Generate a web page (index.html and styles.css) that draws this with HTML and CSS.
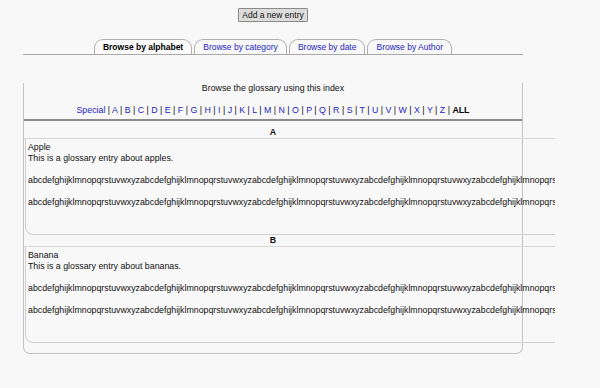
FILE: index.html
```html
<!DOCTYPE html>
<html lang="en">
<head>
    <meta charset="UTF-8">
    <title>Glossary</title>
    <link rel="stylesheet" href="styles.css">
</head>
<body>

    <div class="page">
        <div class="main">
            <div class="actions">
                <button class="btn">Add a new entry</button>
            </div>

            <ul class="tabs">
                <li class="tab active">Browse by alphabet</li>
                <li class="tab"><a href="#">Browse by category</a></li>
                <li class="tab"><a href="#">Browse by date</a></li>
                <li class="tab"><a href="#">Browse by Author</a></li>
            </ul>

            <div class="glossary-box">
                <div class="index">
                    <div class="index-title">Browse the glossary using this index</div>
                    <div class="alphabet">
                        <a href="#">Special</a> | <a href="#">A</a> | <a href="#">B</a> | <a href="#">C</a> | <a href="#">D</a> | <a href="#">E</a> | <a href="#">F</a> | <a href="#">G</a> | <a href="#">H</a> | <a href="#">I</a> | <a href="#">J</a> | <a href="#">K</a> | <a href="#">L</a> | <a href="#">M</a> | <a href="#">N</a> | <a href="#">O</a> | <a href="#">P</a> | <a href="#">Q</a> | <a href="#">R</a> | <a href="#">S</a> | <a href="#">T</a> | <a href="#">U</a> | <a href="#">V</a> | <a href="#">W</a> | <a href="#">X</a> | <a href="#">Y</a> | <a href="#">Z</a> | <b>ALL</b>
                    </div>
                </div>

                <div class="entries">
                    <div class="letter"><span>A</span></div>
                    <div class="entry">
                        <div class="concept">Apple</div>
                        <p>This is a glossary entry about apples.</p>
                        <p>abcdefghijklmnopqrstuvwxyzabcdefghijklmnopqrstuvwxyzabcdefghijklmnopqrstuvwxyzabcdefghijklmnopqrstuvwxyzabcdefghijklmnopqrstuvwxyzabcdefghijklmnopqrstuvwxyz</p>
                        <p>abcdefghijklmnopqrstuvwxyzabcdefghijklmnopqrstuvwxyzabcdefghijklmnopqrstuvwxyzabcdefghijklmnopqrstuvwxyzabcdefghijklmnopqrstuvwxyzabcdefghijklmnopqrstuvwxyz</p>
                    </div>

                    <div class="letter"><span>B</span></div>
                    <div class="entry">
                        <div class="concept">Banana</div>
                        <p>This is a glossary entry about bananas.</p>
                        <p>abcdefghijklmnopqrstuvwxyzabcdefghijklmnopqrstuvwxyzabcdefghijklmnopqrstuvwxyzabcdefghijklmnopqrstuvwxyzabcdefghijklmnopqrstuvwxyzabcdefghijklmnopqrstuvwxyz</p>
                        <p>abcdefghijklmnopqrstuvwxyzabcdefghijklmnopqrstuvwxyzabcdefghijklmnopqrstuvwxyzabcdefghijklmnopqrstuvwxyzabcdefghijklmnopqrstuvwxyzabcdefghijklmnopqrstuvwxyz</p>
                    </div>
                </div>
            </div>
        </div>
    </div>

</body>
</html>
```

FILE: styles.css
```css
body {
    margin: 0;
    background: #f8f8f8;
    font-family: 'Liberation Sans', Arial, sans-serif;
    font-size: 8.8px;
    color: #111;
}
a {
    color: #2424c0;
    text-decoration: none;
}
.page {
    width: 555px;
    height: 388px;
    overflow: hidden;
}
.main {
    width: 500px;
    margin-left: 23px;
}
.actions {
    padding-top: 8px;
    text-align: center;
}
.btn {
    font-family: 'Liberation Sans', Arial, sans-serif;
    font-size: 8.5px;
    height: 14px;
    line-height: 12px;
    padding: 0 3px;
    background: #dcdcdc;
    border: 1px solid #8a8a8a;
    border-radius: 1px;
    color: #111;
}
.tabs {
    list-style: none;
    margin: 17px 0 0 0;
    padding: 0;
    display: flex;
    justify-content: center;
    gap: 2px;
    border-bottom: 1px solid #a8a8a8;
}
.tab {
    font-size: 8.5px;
    height: 14px;
    line-height: 15px;
    padding: 0 8px;
    border: 1px solid #b0b0b0;
    border-bottom: none;
    border-radius: 9px 9px 0 0;
    background: #f8f8f8;
}
.tab.active {
    font-weight: bold;
    color: #000;
    background: #fbfbfb;
}
.glossary-box {
    margin-top: 28px;
    width: 500px;
    box-sizing: border-box;
    border: 1px solid #c4c4c4;
    border-top: none;
    border-radius: 0 0 7px 7px;
    padding-bottom: 10px;
}
.index {
    text-align: center;
    border-bottom: 2px solid #8c8c8c;
}
.index-title {
    line-height: 11px;
}
.alphabet {
    margin-top: 11px;
    line-height: 11px;
    padding-bottom: 3px;
}
.alphabet b {
    color: #000;
}
.entries {
    padding-top: 6px;
    width: 600px;
}
.letter {
    line-height: 11px;
    font-weight: bold;
    border-bottom: 1px solid #d6d6d6;
}
.letter span {
    display: block;
    width: 498px;
    text-align: center;
}
.entry {
    margin-left: 1px;
    padding: 3px 0 26px 2px;
    border-left: 1px solid #d0d0d0;
    border-bottom: 1px solid #d0d0d0;
    border-radius: 0 0 0 8px;
    line-height: 11px;
}
.entry p {
    margin: 0 0 11px 0;
}
.entry p:last-child {
    margin-bottom: 0;
}
.concept {
    line-height: 11px;
}
```
